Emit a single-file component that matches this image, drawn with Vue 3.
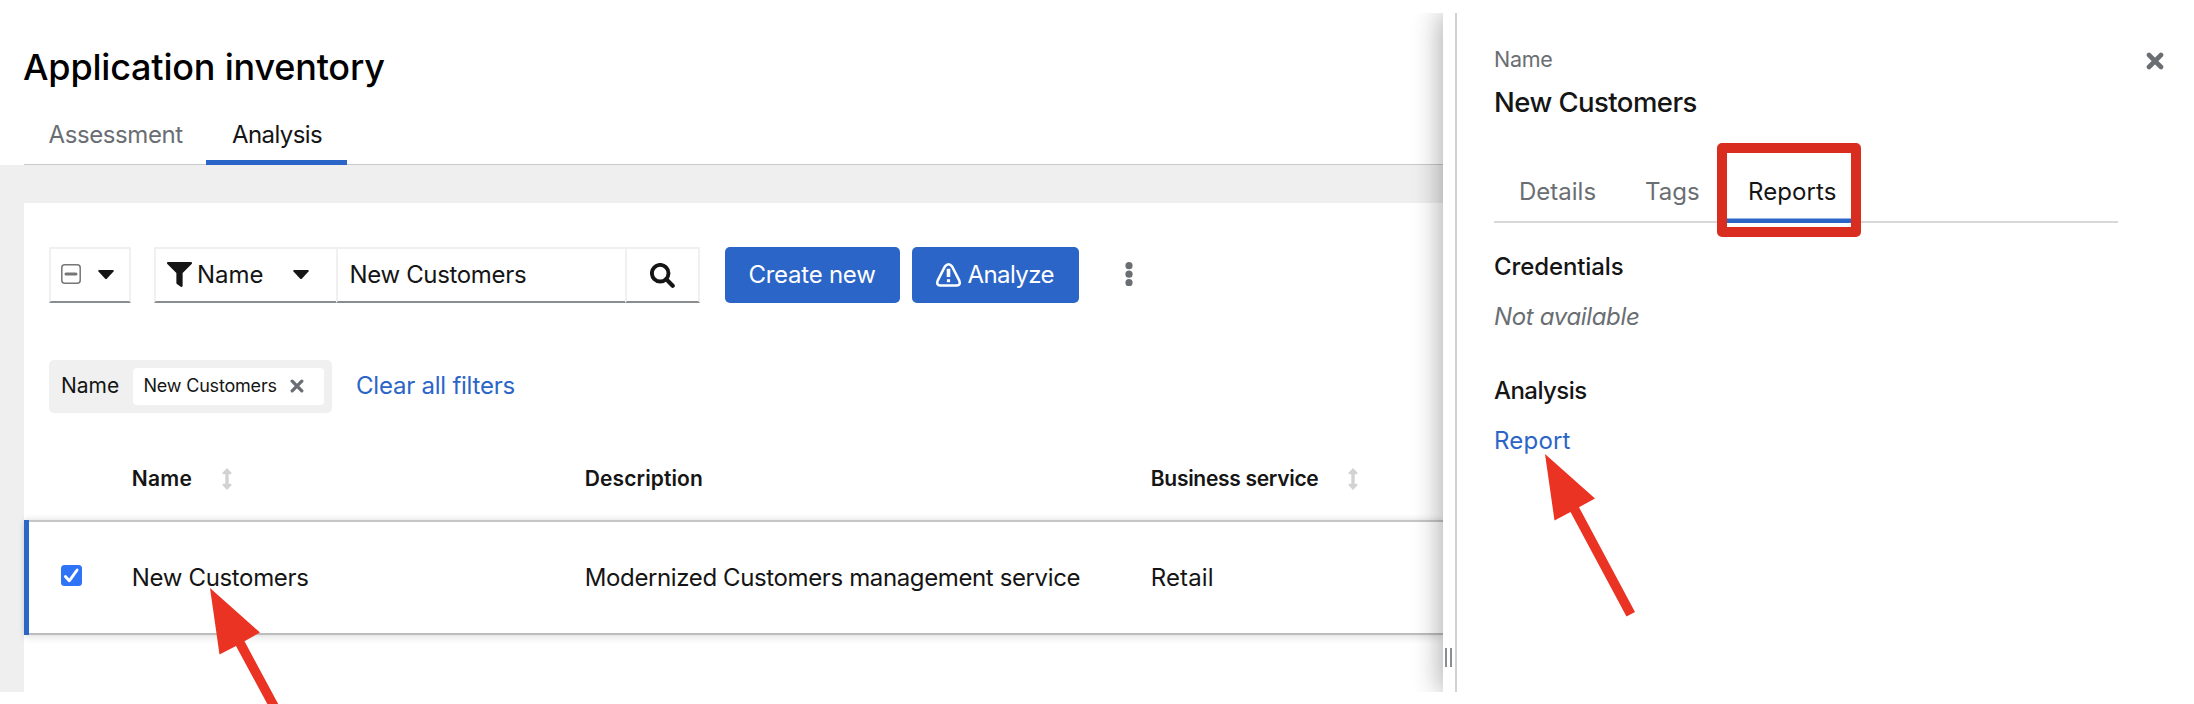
<script setup>
import { ref } from 'vue'

const filterText = ref('New Customers')
const row = {
  name: 'New Customers',
  description: 'Modernized Customers management service',
  service: 'Retail',
}
</script>

<template>
  <div class="page">
    <main class="main">
      <header class="head">
        <h1 class="title">Application inventory</h1>
        <nav class="tabs">
          <a class="tab assess">Assessment</a>
          <a class="tab analysis current">Analysis</a>
        </nav>
      </header>

      <section class="body">
        <div class="card">
          <div class="toolbar">
            <button class="field bulk">
              <svg class="minus" viewBox="0 0 20 20"><rect x="0.8" y="0.8" width="18.4" height="18.4" rx="3" fill="#fff" stroke="#767676" stroke-width="1.5" /><path d="M5 10h10" stroke="#767676" stroke-width="3" stroke-linecap="round" /></svg>
              <svg class="caret" viewBox="0 0 16 10"><path d="M1.2 0h13.6q1.6.4.7 1.6L8.8 8.7q-.8.7-1.6 0L.5 1.6Q-.4.4 1.2 0z" /></svg>
            </button>
            <div class="group">
              <button class="field kind">
                <svg class="funnel" viewBox="0 0 512 512"><path d="M488 0H24C2.700 0-8 25.900 7.100 41L192 225.900V432c0 7.800 3.800 15.200 10.200 19.700l80 56C298 518.700 320 507.500 320 488V225.900L505 41C520 25.900 509.300 0 488 0z" /></svg>
                <span class="kind-label">Name</span>
                <svg class="caret" viewBox="0 0 16 10"><path d="M1.2 0h13.6q1.6.4.7 1.6L8.8 8.7q-.8.7-1.6 0L.5 1.6Q-.4.4 1.2 0z" /></svg>
              </button>
              <div class="field query">{{ filterText }}</div>
              <button class="field find">
                <svg class="lens" viewBox="0 0 25 25" fill="none" stroke="#151515"><circle cx="10.200" cy="10.200" r="8.300" stroke-width="3.900" /><path d="M16.300 16.300l6.400 6.400" stroke-width="4.200" stroke-linecap="round" /></svg>
              </button>
            </div>
            <button class="btn create">Create new</button>
            <button class="btn analyze">
              <svg class="warn" viewBox="0 0 25 24" fill="none" stroke="#fff"><path d="M8.800 3.600Q12.500-1 16.200 3.600L23.300 17.600Q24.900 22.300 20.800 22.500H4.200Q.1 22.300 1.700 17.600z" stroke-width="2.500" /><path d="M12.500 5.800v8.200" stroke-width="3.600" /><path d="M12.500 16.200v3" stroke-width="3.200" /></svg>
              Analyze
            </button>
            <svg class="kebab" viewBox="0 0 8 24" fill="#6a6e73"><circle cx="4" cy="3.700" r="3.600" /><circle cx="4" cy="12.200" r="3.600" /><circle cx="4" cy="20.700" r="3.600" /></svg>
          </div>

          <div class="filters">
            <div class="chips">
              <span class="chips-label">Name</span>
              <span class="chip">
                {{ filterText }}
                <svg class="chip-x" viewBox="0 0 14 14"><path d="M2.200 2.200l9.600 9.600M11.800 2.200l-9.600 9.600" stroke="#6a6e73" stroke-width="3.300" stroke-linecap="round" /></svg>
              </span>
            </div>
            <a class="clear">Clear all filters</a>
          </div>

          <div class="thead">
            <span></span>
            <span class="th th-name">Name <svg class="sort" viewBox="0 0 10 22"><path d="M5 0L9.500 4.800Q9.800 6.200 8.600 6.300H6.700V15.700H8.600Q9.800 15.800 9.500 17.200L5 22 .5 17.200Q.2 15.800 1.400 15.700H3.300V6.300H1.400Q.2 6.200.5 4.800z" /></svg></span>
            <span class="th th-desc">Description</span>
            <span class="th th-serv">Business service <svg class="sort" viewBox="0 0 10 22"><path d="M5 0L9.500 4.800Q9.800 6.200 8.600 6.300H6.700V15.700H8.600Q9.800 15.800 9.500 17.200L5 22 .5 17.200Q.2 15.800 1.400 15.700H3.300V6.300H1.400Q.2 6.200.5 4.800z" /></svg></span>
          </div>

          <div class="row">
            <svg class="check" viewBox="0 0 21 21"><rect width="21" height="21" rx="3.500" fill="#2f74f7" /><path d="M4.400 11.600l3.900 4.200L16.100 5" fill="none" stroke="#fff" stroke-width="2.900" stroke-linecap="round" stroke-linejoin="round" /></svg>
            <span class="td-name">{{ row.name }}</span>
            <span class="td-desc">{{ row.description }}</span>
            <span class="td-serv">{{ row.service }}</span>
          </div>
        </div>
      </section>
    </main>

    <aside class="drawer">
      <div class="splitter"><i></i><i></i></div>
      <div class="panel">
        <div class="panel-head">
          <div>
            <div class="small">Name</div>
            <h2 class="app">{{ row.name }}</h2>
          </div>
          <svg class="close" viewBox="0 0 18 18"><path d="M3 3l12 12M15 3L3 15" stroke="#6a6e73" stroke-width="4.600" stroke-linecap="round" /></svg>
        </div>
        <nav class="ptabs">
          <a class="ptab">Details</a>
          <a class="ptab tags">Tags</a>
          <a class="ptab reports">Reports<b class="highlight"></b></a>
        </nav>
        <h3 class="sub cred">Credentials</h3>
        <p class="none">Not available</p>
        <h3 class="sub ana">Analysis</h3>
        <a class="report">Report</a>
      </div>
    </aside>

    <svg class="arrow on-row" viewBox="0 0 92 164"><path d="M0 0L50 44.500 34.500 53.200 91 158.500 82.500 162.500 26 58 9.500 66.500z" /></svg>
    <svg class="arrow on-report" viewBox="0 0 92 164"><path d="M0 0L50 44.500 34 53.200 90 158 81.500 162.500 25.500 58 9.500 66.500z" /></svg>
  </div>
</template>

<style>
body { margin: 0; overflow: hidden; background: #fff; }
</style>

<style scoped>
* { box-sizing: border-box; }
.page { position: relative; display: flex; width: 2194px; height: 704px; padding: 13px 0 12px; overflow: hidden; background: #fff; color: #151515; font: 24px/36px Inter, "Liberation Sans", sans-serif; }
h1, h2, h3, p { margin: 0; }
svg { display: block; flex: none; }
button { font: inherit; color: inherit; border: 0; padding: 0; background: none; }

.main { width: 1443px; display: flex; flex-direction: column; }
.head { height: 152px; padding: 32px 0 0 24px; }
.title { height: 44px; margin-left: -1px; font-size: 36px; line-height: 44px; font-weight: 500; letter-spacing: -0.2px; color: #000; }
.tabs { display: flex; height: 76px; box-shadow: inset 0 -1px #c9c9c9; }
.tab { padding: 28px 0 0 24.500px; color: #6a6e73; }
.assess { width: 182px; letter-spacing: -0.4px; }
.analysis { width: 141px; padding-left: 26px; letter-spacing: -0.6px; }
.current { color: #151515; box-shadow: inset 0 -5px #2b65c7; }

.body { flex: 1; padding: 37.500px 0 0 24px; background: #efefef; }
.card { height: 100%; padding-top: 44.500px; background: #fff; }

.toolbar { display: flex; align-items: center; height: 56px; padding-left: 25px; }
.field { display: flex; align-items: center; height: 56px; border: 2px solid #f0f0f0; border-bottom-color: #8a8d90; }
.bulk { width: 82px; padding-left: 10px; }
.minus { width: 20px; height: 20px; margin-right: 17px; margin-top: -3px; }
.caret { width: 16px; height: 10px; fill: #151515; }
.group { display: flex; width: 546px; margin-left: 23px; }
.kind { width: 182px; padding-left: 11px; border-right: 0; }
.funnel { width: 25px; height: 25px; margin-top: -1px; fill: #151515; }
.kind-label { width: 101px; padding-left: 5px; text-align: left; }
.query { width: 289px; padding-left: 11.500px; letter-spacing: -0.34px; border-right: 0; }
.find { flex: 1; justify-content: center; }
.lens { width: 25px; height: 25px; }
.btn { display: flex; align-items: center; justify-content: center; height: 56px; border-radius: 5px; background: #2b65c7; color: #fff; }
.create { width: 175px; margin-left: 24.500px; letter-spacing: -0.25px; }
.analyze { width: 167.500px; margin-left: 12px; letter-spacing: -0.57px; gap: 6px; }
.warn { width: 25px; height: 24px; }
.kebab { width: 8px; height: 24px; margin: -3px 0 0 45.500px; }

.filters { display: flex; align-items: center; height: 52.500px; margin: 57px 0 0 25px; }
.chips { display: flex; align-items: center; width: 283px; height: 52.500px; padding-left: 12px; border-radius: 5px; background: #f0f0f0; font-size: 21px; }
.chips-label { width: 72px; }
.chip { display: flex; align-items: center; width: 191px; height: 37px; padding-left: 10.500px; border-radius: 4px; background: #fff; font-size: 18px; letter-spacing: -0.2px; }
.chip-x { width: 14px; height: 14px; margin-left: 13.500px; }
.clear { margin-left: 24px; color: #2b65c7; letter-spacing: -0.23px; }

.thead, .row { display: grid; grid-template-columns: 107.800px 453px 566px 1fr; }
.thead { height: 107px; padding-top: 51px; align-items: start; font-size: 21px; line-height: 30px; font-weight: 600; }
.th { display: flex; align-items: center; gap: 30px; }
.th-name { letter-spacing: 0.25px; }
.th-desc { letter-spacing: 0.1px; }
.th-serv { letter-spacing: -0.3px; }
.sort { width: 10px; height: 22px; fill: #d2d2d2; }
.row { height: 115px; align-items: center; border-top: 2px solid #c6c6c6; border-bottom: 2px solid #bdbdbd; box-shadow: 0 -2px 5px rgba(0, 0, 0, 0.07), 0 3px 7px rgba(0, 0, 0, 0.1); position: relative; }
.row::before { content: ""; position: absolute; left: 0; top: -2px; bottom: -2px; width: 4.500px; background: #2b65c7; }
.check { width: 21px; height: 21px; margin: -4px 0 0 37px; }
.td-name { letter-spacing: -0.34px; }
.td-desc { letter-spacing: -0.38px; }
.td-serv { letter-spacing: 0.1px; }
.td-name, .td-desc, .td-serv { padding-top: 1px; }

/* The clip keeps the drawer's shadow inside the window's vertical bounds. */
.drawer { position: relative; display: flex; width: 751px; background: #fff; box-shadow: -3px 0 26px rgba(0, 0, 0, 0.32); clip-path: inset(0 0 0 -60px); }
.splitter { display: flex; align-items: flex-end; justify-content: center; gap: 3px; width: 14px; padding: 0 1px 25px 0; border-right: 2px solid #d2d2d2; }
.splitter i { width: 2px; height: 19px; background: #8a8d90; }
.panel { flex: 1; padding: 28px 30px 0 37px; }
.panel-head { display: flex; justify-content: space-between; }
.small { font-size: 21.500px; letter-spacing: -0.3px; color: #6a6e73; }
.app { margin-top: 6px; margin-bottom: 1px; line-height: 38px; font-size: 27.500px; font-weight: 500; letter-spacing: -0.55px; }
.close { width: 18px; height: 18px; margin-top: 10.500px; }
.ptabs { display: flex; width: 624px; height: 101px; padding-top: 52px; box-shadow: inset 0 -2px #d8d8d8; }
.ptab { width: 126px; padding-left: 25px; color: #6a6e73; }
.tags { width: 102px; }
.reports { position: relative; width: 139px; padding-left: 26px; letter-spacing: 0.1px; color: #151515; box-shadow: inset 0 -4.500px #2b65c7; }
.highlight { position: absolute; left: -5px; top: -31px; width: 144px; height: 94px; border: 10px solid #d92d20; border-radius: 5px; }
.sub { font-size: 24px; font-weight: 500; }
.cred { margin-top: 26px; letter-spacing: -0.1px; }
.none { margin-top: 13.500px; font-style: italic; letter-spacing: -0.35px; color: #6a6e73; }
.ana { margin-top: 38px; letter-spacing: -0.55px; }
.report { display: block; margin-top: 14px; color: #2b65c7; letter-spacing: 0.2px; }

.arrow { position: absolute; width: 92px; height: 164px; fill: #ea3323; }
.on-row { left: 210px; top: 588px; }
.on-report { left: 1545px; top: 454px; }
</style>
